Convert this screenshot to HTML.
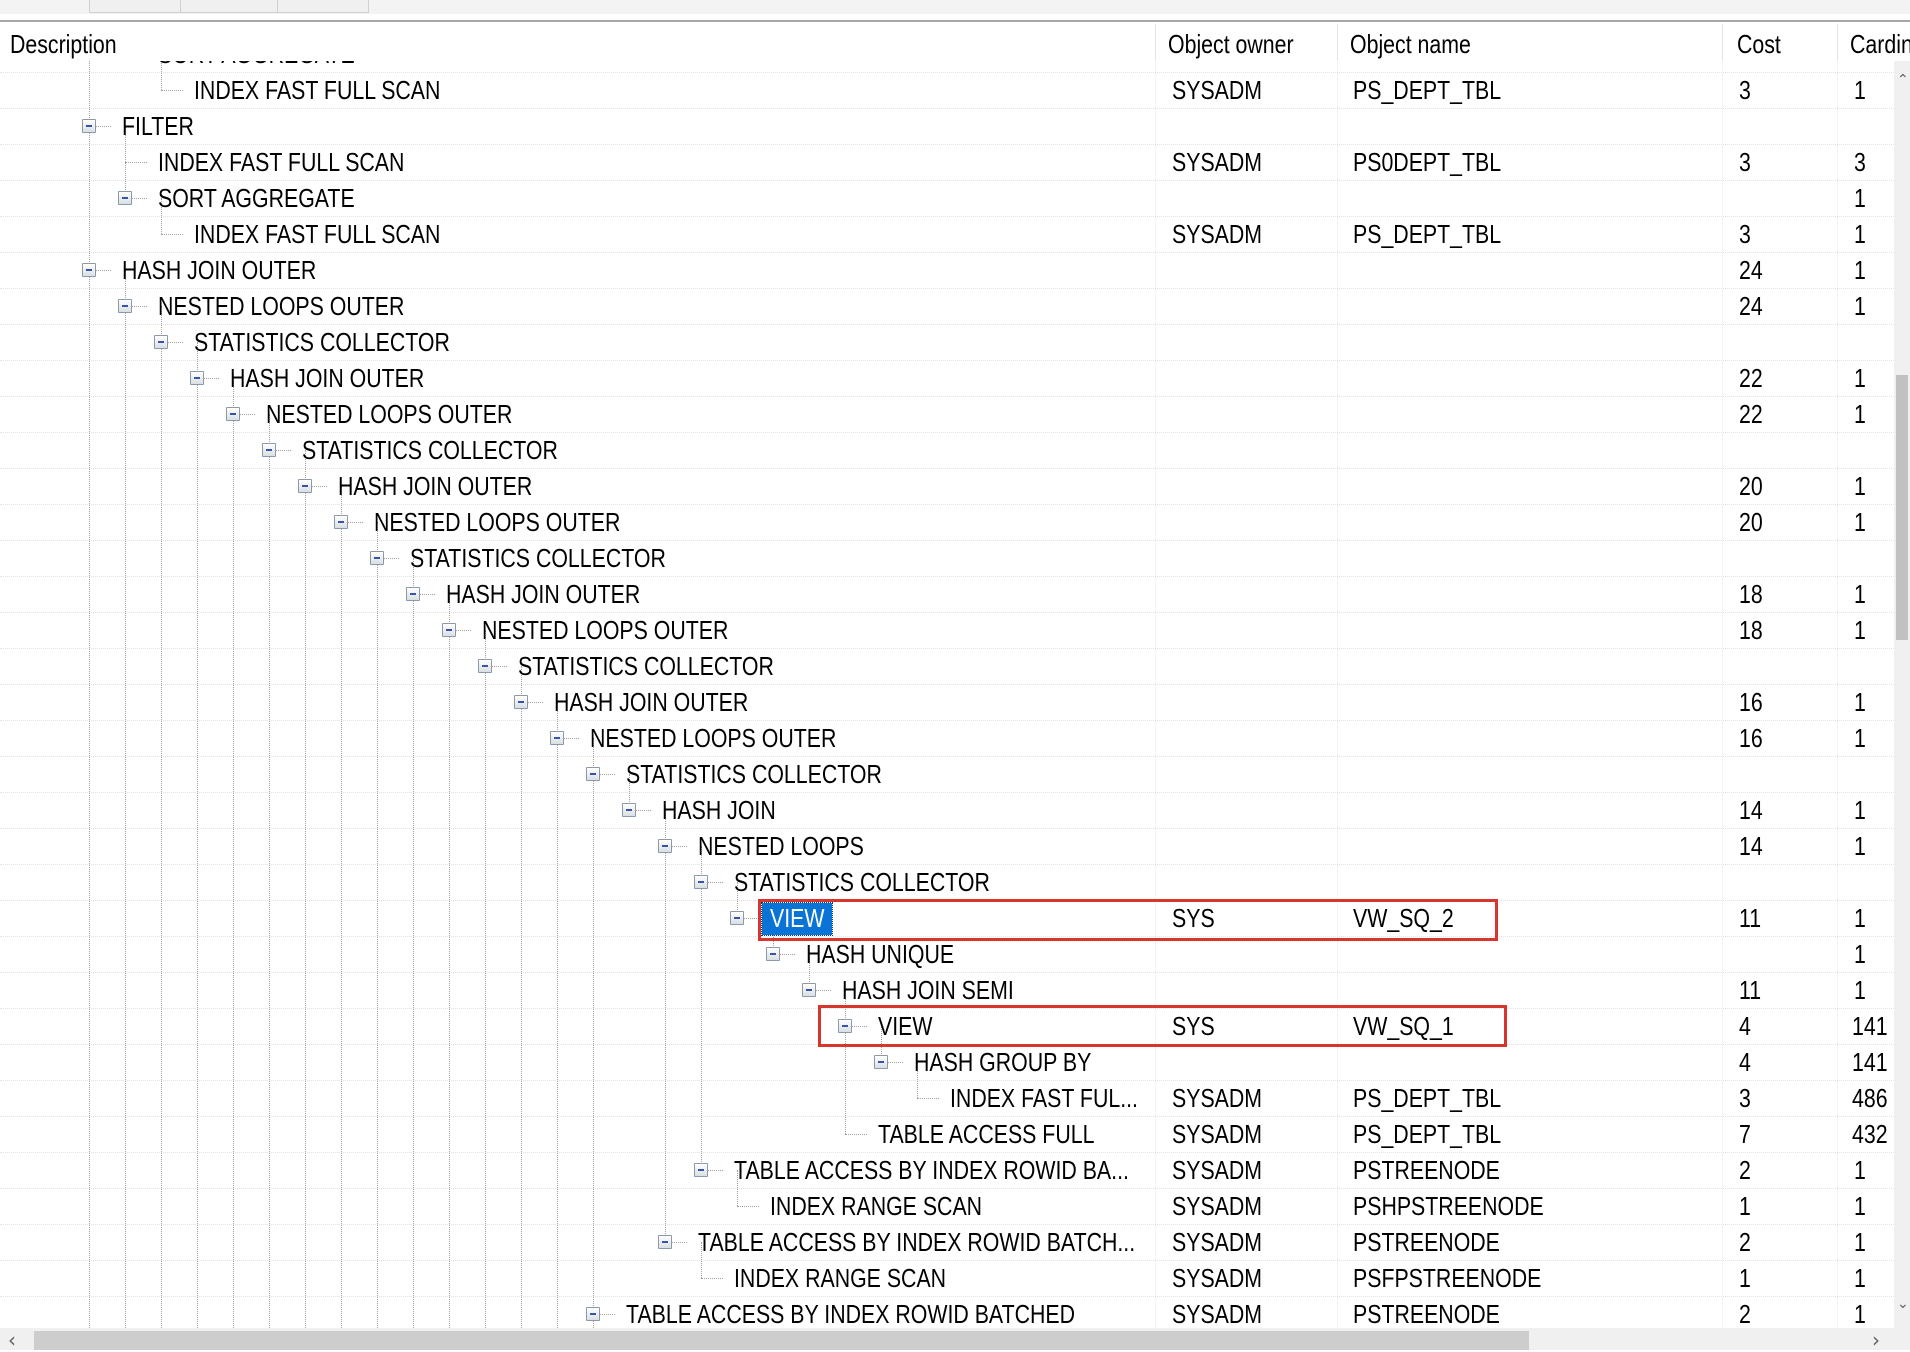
<!DOCTYPE html>
<html><head><meta charset="utf-8"><style>
*{margin:0;padding:0;box-sizing:border-box}
body{width:1910px;height:1350px;overflow:hidden;background:#fff;position:relative;font-family:"Liberation Sans",sans-serif}
.t{position:absolute;font-size:26px;line-height:36px;height:36px;transform:scaleX(.82);transform-origin:0 50%;white-space:nowrap;color:#000}
.v{position:absolute;width:0;border-left:1px dotted #a0a0a0}
.h{position:absolute;height:0;border-top:1px dotted #a0a0a0}
.b{position:absolute;width:14px;height:14px;border:1px solid #8c99a6;background:linear-gradient(#fff,#d8dfe6);border-radius:1px}
.b::after{content:"";position:absolute;left:3px;top:5px;width:6px;height:2px;background:#3a55a0}
.g{position:absolute;left:0;width:1894px;height:0;border-top:1px dotted #e4e4e4}
.c{position:absolute;top:61px;height:1267px;width:0;border-left:1px dotted #e8e8e8}
#clip{position:absolute;left:0;top:61px;width:1894px;height:1267px;overflow:hidden}
#in{position:absolute;left:0;top:-61px;width:1894px;height:1350px}
</style></head><body>
<!-- tab bar -->
<div style="position:absolute;left:0;top:0;width:1910px;height:14px;background:#f3f3f3"></div>
<div style="position:absolute;left:89px;top:0;width:92px;height:13px;border:1px solid #d0d0d0;border-top:none;background:#f0f0f0"></div>
<div style="position:absolute;left:180px;top:0;width:98px;height:13px;border:1px solid #d0d0d0;border-top:none;background:#f0f0f0"></div>
<div style="position:absolute;left:277px;top:0;width:92px;height:13px;border:1px solid #d0d0d0;border-top:none;background:#f0f0f0"></div>
<div style="position:absolute;left:0;top:20px;width:1910px;height:2px;background:#a8a8a8"></div>
<!-- header -->
<div class="t" style="left:10px;top:26px">Description</div>
<div class="t" style="left:1168px;top:26px">Object owner</div>
<div class="t" style="left:1350px;top:26px">Object name</div>
<div class="t" style="left:1737px;top:26px">Cost</div>
<div class="t" style="left:1850px;top:26px">Cardinality</div>
<div style="position:absolute;left:1155px;top:24px;width:1px;height:36px;background:#e3e3e3"></div>
<div style="position:absolute;left:1337px;top:24px;width:1px;height:36px;background:#e3e3e3"></div>
<div style="position:absolute;left:1722px;top:24px;width:1px;height:36px;background:#e3e3e3"></div>
<div style="position:absolute;left:1837px;top:24px;width:1px;height:36px;background:#e3e3e3"></div>

<div id="clip"><div id="in">
<div class="c" style="left:1155px"></div><div class="c" style="left:1337px"></div><div class="c" style="left:1722px"></div><div class="c" style="left:1837px"></div>
<div class="g" style="top:72px"></div><div class="g" style="top:108px"></div><div class="g" style="top:144px"></div><div class="g" style="top:180px"></div><div class="g" style="top:216px"></div><div class="g" style="top:252px"></div><div class="g" style="top:288px"></div><div class="g" style="top:324px"></div><div class="g" style="top:360px"></div><div class="g" style="top:396px"></div><div class="g" style="top:432px"></div><div class="g" style="top:468px"></div><div class="g" style="top:504px"></div><div class="g" style="top:540px"></div><div class="g" style="top:576px"></div><div class="g" style="top:612px"></div><div class="g" style="top:648px"></div><div class="g" style="top:684px"></div><div class="g" style="top:720px"></div><div class="g" style="top:756px"></div><div class="g" style="top:792px"></div><div class="g" style="top:828px"></div><div class="g" style="top:864px"></div><div class="g" style="top:900px"></div><div class="g" style="top:936px"></div><div class="g" style="top:972px"></div><div class="g" style="top:1008px"></div><div class="g" style="top:1044px"></div><div class="g" style="top:1080px"></div><div class="g" style="top:1116px"></div><div class="g" style="top:1152px"></div><div class="g" style="top:1188px"></div><div class="g" style="top:1224px"></div><div class="g" style="top:1260px"></div><div class="g" style="top:1296px"></div>

<!-- vertical tree lines -->
<div class="v" style="left:89px;top:40px;height:1300px"></div>
<div class="v" style="left:125px;top:126px;height:72px"></div>
<div class="v" style="left:125px;top:270px;height:1070px"></div>
<div class="v" style="left:161px;top:40px;height:50px"></div>
<div class="v" style="left:161px;top:198px;height:36px"></div>
<div class="v" style="left:161px;top:306px;height:1040px"></div>
<div class="v" style="left:197px;top:342px;height:1000px"></div>
<div class="v" style="left:233px;top:378px;height:970px"></div>
<div class="v" style="left:269px;top:414px;height:940px"></div>
<div class="v" style="left:305px;top:450px;height:900px"></div>
<div class="v" style="left:341px;top:486px;height:860px"></div>
<div class="v" style="left:377px;top:522px;height:830px"></div>
<div class="v" style="left:413px;top:558px;height:790px"></div>
<div class="v" style="left:449px;top:594px;height:760px"></div>
<div class="v" style="left:485px;top:630px;height:720px"></div>
<div class="v" style="left:521px;top:666px;height:690px"></div>
<div class="v" style="left:557px;top:702px;height:650px"></div>
<div class="v" style="left:593px;top:738px;height:610px"></div>
<div class="v" style="left:629px;top:774px;height:36px"></div>
<div class="v" style="left:665px;top:810px;height:432px"></div>
<div class="v" style="left:701px;top:846px;height:324px"></div>
<div class="v" style="left:701px;top:1242px;height:36px"></div>
<div class="v" style="left:737px;top:882px;height:36px"></div>
<div class="v" style="left:737px;top:1170px;height:36px"></div>
<div class="v" style="left:773px;top:918px;height:36px"></div>
<div class="v" style="left:809px;top:954px;height:36px"></div>
<div class="v" style="left:845px;top:990px;height:144px"></div>
<div class="v" style="left:881px;top:1026px;height:36px"></div>
<div class="v" style="left:917px;top:1062px;height:36px"></div>

<!-- leaf connectors -->
<div class="h" style="left:161px;top:90px;width:22px"></div>
<div class="h" style="left:125px;top:162px;width:22px"></div>
<div class="h" style="left:161px;top:234px;width:22px"></div>
<div class="h" style="left:917px;top:1098px;width:22px"></div>
<div class="h" style="left:845px;top:1134px;width:22px"></div>
<div class="h" style="left:737px;top:1206px;width:22px"></div>
<div class="h" style="left:701px;top:1278px;width:22px"></div>

<!-- expander boxes: row i center 90+36i, x 89+36L -->
<div class="h" style="left:125px;top:54px;width:22px"></div><div class="b" style="left:118px;top:47px"></div>
<div class="h" style="left:89px;top:126px;width:22px"></div><div class="b" style="left:82px;top:119px"></div>
<div class="h" style="left:125px;top:198px;width:22px"></div><div class="b" style="left:118px;top:191px"></div>
<div class="h" style="left:89px;top:270px;width:22px"></div><div class="b" style="left:82px;top:263px"></div>
<div class="h" style="left:125px;top:306px;width:22px"></div><div class="b" style="left:118px;top:299px"></div>
<div class="h" style="left:161px;top:342px;width:22px"></div><div class="b" style="left:154px;top:335px"></div>
<div class="h" style="left:197px;top:378px;width:22px"></div><div class="b" style="left:190px;top:371px"></div>
<div class="h" style="left:233px;top:414px;width:22px"></div><div class="b" style="left:226px;top:407px"></div>
<div class="h" style="left:269px;top:450px;width:22px"></div><div class="b" style="left:262px;top:443px"></div>
<div class="h" style="left:305px;top:486px;width:22px"></div><div class="b" style="left:298px;top:479px"></div>
<div class="h" style="left:341px;top:522px;width:22px"></div><div class="b" style="left:334px;top:515px"></div>
<div class="h" style="left:377px;top:558px;width:22px"></div><div class="b" style="left:370px;top:551px"></div>
<div class="h" style="left:413px;top:594px;width:22px"></div><div class="b" style="left:406px;top:587px"></div>
<div class="h" style="left:449px;top:630px;width:22px"></div><div class="b" style="left:442px;top:623px"></div>
<div class="h" style="left:485px;top:666px;width:22px"></div><div class="b" style="left:478px;top:659px"></div>
<div class="h" style="left:521px;top:702px;width:22px"></div><div class="b" style="left:514px;top:695px"></div>
<div class="h" style="left:557px;top:738px;width:22px"></div><div class="b" style="left:550px;top:731px"></div>
<div class="h" style="left:593px;top:774px;width:22px"></div><div class="b" style="left:586px;top:767px"></div>
<div class="h" style="left:629px;top:810px;width:22px"></div><div class="b" style="left:622px;top:803px"></div>
<div class="h" style="left:665px;top:846px;width:22px"></div><div class="b" style="left:658px;top:839px"></div>
<div class="h" style="left:701px;top:882px;width:22px"></div><div class="b" style="left:694px;top:875px"></div>
<div class="h" style="left:737px;top:918px;width:22px"></div><div class="b" style="left:730px;top:911px"></div>
<div class="h" style="left:773px;top:954px;width:22px"></div><div class="b" style="left:766px;top:947px"></div>
<div class="h" style="left:809px;top:990px;width:22px"></div><div class="b" style="left:802px;top:983px"></div>
<div class="h" style="left:845px;top:1026px;width:22px"></div><div class="b" style="left:838px;top:1019px"></div>
<div class="h" style="left:881px;top:1062px;width:22px"></div><div class="b" style="left:874px;top:1055px"></div>
<div class="h" style="left:701px;top:1170px;width:22px"></div><div class="b" style="left:694px;top:1163px"></div>
<div class="h" style="left:665px;top:1242px;width:22px"></div><div class="b" style="left:658px;top:1235px"></div>
<div class="h" style="left:593px;top:1314px;width:22px"></div><div class="b" style="left:586px;top:1307px"></div>

<!-- selection -->
<div style="position:absolute;left:762px;top:903px;width:70px;height:32px;background:#0a74d6;outline:1px dotted #0a3a80"></div>

<!-- tree text -->
<div class="t" style="left:158px;top:36px">SORT AGGREGATE</div>
<div class="t" style="left:194px;top:72px">INDEX FAST FULL SCAN</div>
<div class="t" style="left:122px;top:108px">FILTER</div>
<div class="t" style="left:158px;top:144px">INDEX FAST FULL SCAN</div>
<div class="t" style="left:158px;top:180px">SORT AGGREGATE</div>
<div class="t" style="left:194px;top:216px">INDEX FAST FULL SCAN</div>
<div class="t" style="left:122px;top:252px">HASH JOIN OUTER</div>
<div class="t" style="left:158px;top:288px">NESTED LOOPS OUTER</div>
<div class="t" style="left:194px;top:324px">STATISTICS COLLECTOR</div>
<div class="t" style="left:230px;top:360px">HASH JOIN OUTER</div>
<div class="t" style="left:266px;top:396px">NESTED LOOPS OUTER</div>
<div class="t" style="left:302px;top:432px">STATISTICS COLLECTOR</div>
<div class="t" style="left:338px;top:468px">HASH JOIN OUTER</div>
<div class="t" style="left:374px;top:504px">NESTED LOOPS OUTER</div>
<div class="t" style="left:410px;top:540px">STATISTICS COLLECTOR</div>
<div class="t" style="left:446px;top:576px">HASH JOIN OUTER</div>
<div class="t" style="left:482px;top:612px">NESTED LOOPS OUTER</div>
<div class="t" style="left:518px;top:648px">STATISTICS COLLECTOR</div>
<div class="t" style="left:554px;top:684px">HASH JOIN OUTER</div>
<div class="t" style="left:590px;top:720px">NESTED LOOPS OUTER</div>
<div class="t" style="left:626px;top:756px">STATISTICS COLLECTOR</div>
<div class="t" style="left:662px;top:792px">HASH JOIN</div>
<div class="t" style="left:698px;top:828px">NESTED LOOPS</div>
<div class="t" style="left:734px;top:864px">STATISTICS COLLECTOR</div>
<div class="t" style="left:770px;top:900px;color:#fff">VIEW</div>
<div class="t" style="left:806px;top:936px">HASH UNIQUE</div>
<div class="t" style="left:842px;top:972px">HASH JOIN SEMI</div>
<div class="t" style="left:878px;top:1008px">VIEW</div>
<div class="t" style="left:914px;top:1044px">HASH GROUP BY</div>
<div class="t" style="left:950px;top:1080px">INDEX FAST FUL...</div>
<div class="t" style="left:878px;top:1116px">TABLE ACCESS FULL</div>
<div class="t" style="left:734px;top:1152px">TABLE ACCESS BY INDEX ROWID BA...</div>
<div class="t" style="left:770px;top:1188px">INDEX RANGE SCAN</div>
<div class="t" style="left:698px;top:1224px">TABLE ACCESS BY INDEX ROWID BATCH...</div>
<div class="t" style="left:734px;top:1260px">INDEX RANGE SCAN</div>
<div class="t" style="left:626px;top:1296px">TABLE ACCESS BY INDEX ROWID BATCHED</div>

<!-- columns -->
<div class="t" style="left:1172px;top:72px">SYSADM</div><div class="t" style="left:1353px;top:72px">PS_DEPT_TBL</div><div class="t" style="left:1739px;top:72px">3</div><div class="t" style="left:1854px;top:72px">1</div>
<div class="t" style="left:1172px;top:144px">SYSADM</div><div class="t" style="left:1353px;top:144px">PS0DEPT_TBL</div><div class="t" style="left:1739px;top:144px">3</div><div class="t" style="left:1854px;top:144px">3</div>
<div class="t" style="left:1854px;top:180px">1</div>
<div class="t" style="left:1172px;top:216px">SYSADM</div><div class="t" style="left:1353px;top:216px">PS_DEPT_TBL</div><div class="t" style="left:1739px;top:216px">3</div><div class="t" style="left:1854px;top:216px">1</div>
<div class="t" style="left:1739px;top:252px">24</div><div class="t" style="left:1854px;top:252px">1</div>
<div class="t" style="left:1739px;top:288px">24</div><div class="t" style="left:1854px;top:288px">1</div>
<div class="t" style="left:1739px;top:360px">22</div><div class="t" style="left:1854px;top:360px">1</div>
<div class="t" style="left:1739px;top:396px">22</div><div class="t" style="left:1854px;top:396px">1</div>
<div class="t" style="left:1739px;top:468px">20</div><div class="t" style="left:1854px;top:468px">1</div>
<div class="t" style="left:1739px;top:504px">20</div><div class="t" style="left:1854px;top:504px">1</div>
<div class="t" style="left:1739px;top:576px">18</div><div class="t" style="left:1854px;top:576px">1</div>
<div class="t" style="left:1739px;top:612px">18</div><div class="t" style="left:1854px;top:612px">1</div>
<div class="t" style="left:1739px;top:684px">16</div><div class="t" style="left:1854px;top:684px">1</div>
<div class="t" style="left:1739px;top:720px">16</div><div class="t" style="left:1854px;top:720px">1</div>
<div class="t" style="left:1739px;top:792px">14</div><div class="t" style="left:1854px;top:792px">1</div>
<div class="t" style="left:1739px;top:828px">14</div><div class="t" style="left:1854px;top:828px">1</div>
<div class="t" style="left:1172px;top:900px">SYS</div><div class="t" style="left:1353px;top:900px">VW_SQ_2</div><div class="t" style="left:1739px;top:900px">11</div><div class="t" style="left:1854px;top:900px">1</div>
<div class="t" style="left:1854px;top:936px">1</div>
<div class="t" style="left:1739px;top:972px">11</div><div class="t" style="left:1854px;top:972px">1</div>
<div class="t" style="left:1172px;top:1008px">SYS</div><div class="t" style="left:1353px;top:1008px">VW_SQ_1</div><div class="t" style="left:1739px;top:1008px">4</div><div class="t" style="left:1852px;top:1008px">141</div>
<div class="t" style="left:1739px;top:1044px">4</div><div class="t" style="left:1852px;top:1044px">141</div>
<div class="t" style="left:1172px;top:1080px">SYSADM</div><div class="t" style="left:1353px;top:1080px">PS_DEPT_TBL</div><div class="t" style="left:1739px;top:1080px">3</div><div class="t" style="left:1852px;top:1080px">486</div>
<div class="t" style="left:1172px;top:1116px">SYSADM</div><div class="t" style="left:1353px;top:1116px">PS_DEPT_TBL</div><div class="t" style="left:1739px;top:1116px">7</div><div class="t" style="left:1852px;top:1116px">432</div>
<div class="t" style="left:1172px;top:1152px">SYSADM</div><div class="t" style="left:1353px;top:1152px">PSTREENODE</div><div class="t" style="left:1739px;top:1152px">2</div><div class="t" style="left:1854px;top:1152px">1</div>
<div class="t" style="left:1172px;top:1188px">SYSADM</div><div class="t" style="left:1353px;top:1188px">PSHPSTREENODE</div><div class="t" style="left:1739px;top:1188px">1</div><div class="t" style="left:1854px;top:1188px">1</div>
<div class="t" style="left:1172px;top:1224px">SYSADM</div><div class="t" style="left:1353px;top:1224px">PSTREENODE</div><div class="t" style="left:1739px;top:1224px">2</div><div class="t" style="left:1854px;top:1224px">1</div>
<div class="t" style="left:1172px;top:1260px">SYSADM</div><div class="t" style="left:1353px;top:1260px">PSFPSTREENODE</div><div class="t" style="left:1739px;top:1260px">1</div><div class="t" style="left:1854px;top:1260px">1</div>
<div class="t" style="left:1172px;top:1296px">SYSADM</div><div class="t" style="left:1353px;top:1296px">PSTREENODE</div><div class="t" style="left:1739px;top:1296px">2</div><div class="t" style="left:1854px;top:1296px">1</div>

<!-- red boxes -->
<div style="position:absolute;left:758px;top:899px;width:740px;height:42px;border:3px solid #d8362c"></div>
<div style="position:absolute;left:818px;top:1005px;width:689px;height:42px;border:3px solid #d8362c"></div>
</div></div>

<!-- vertical scrollbar -->
<div style="position:absolute;left:1894px;top:61px;width:16px;height:1267px;background:#f0f0f0"></div>
<div style="position:absolute;left:1897px;top:72px;font-size:14px;color:#606060;font-family:'DejaVu Sans',sans-serif">&#8963;</div>
<div style="position:absolute;left:1896px;top:375px;width:12px;height:265px;background:#c1c1c1"></div>
<div style="position:absolute;left:1897px;top:1296px;font-size:14px;color:#606060;font-family:'DejaVu Sans',sans-serif">&#8964;</div>
<!-- horizontal scrollbar -->
<div style="position:absolute;left:0;top:1328px;width:1910px;height:22px;background:#f0f0f0"></div>
<div style="position:absolute;left:34px;top:1331px;width:1495px;height:19px;background:#cdcdcd"></div>
<div style="position:absolute;left:8px;top:1328px;font-size:20px;color:#606060;font-family:'DejaVu Sans',sans-serif">&#8249;</div>
<div style="position:absolute;left:1872px;top:1328px;font-size:20px;color:#606060;font-family:'DejaVu Sans',sans-serif">&#8250;</div>
</body></html>
